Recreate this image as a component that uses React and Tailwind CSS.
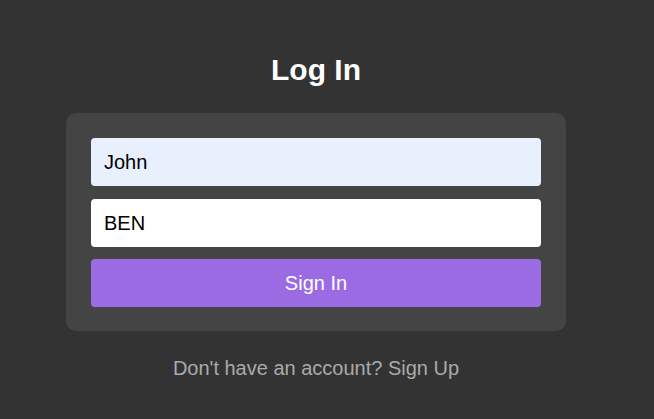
import { useState } from "react";

export default function App() {
  const [form, setForm] = useState({ username: "John", password: "BEN" });

  const handleChange = (e) => {
    const { name, value } = e.target;
    setForm((prev) => ({ ...prev, [name]: value }));
  };

  return (
    <div className="flex min-h-[419px] flex-col items-center bg-[#333333] pt-[52px] pr-[22px] font-['Liberation_Sans',Arial,sans-serif]">
      {/* Title */}
      <h1 className="text-[30px] leading-9 font-bold text-white">Log In</h1>

      {/* Card */}
      <form
        onSubmit={(e) => e.preventDefault()}
        className="mt-[25px] flex w-[500px] flex-col gap-[13px] rounded-[10px] bg-[#444444] px-[25px] pt-[25px] pb-[24px]"
      >
        <input
          name="username"
          value={form.username}
          onChange={handleChange}
          className="h-12 rounded bg-[#e8f0fe] px-[13px] text-xl text-black outline-none"
        />
        <input
          name="password"
          value={form.password}
          onChange={handleChange}
          className="h-12 rounded bg-white px-[13px] text-xl text-black outline-none"
        />
        <button
          type="submit"
          className="-mt-[1px] h-12 rounded bg-[#9b6be3] text-xl text-white"
        >
          Sign In
        </button>
      </form>

      {/* Footer */}
      <p className="mt-[23px] text-xl leading-7 text-[#aaaaaa]">
        Don't have an account? Sign Up
      </p>
    </div>
  );
}
